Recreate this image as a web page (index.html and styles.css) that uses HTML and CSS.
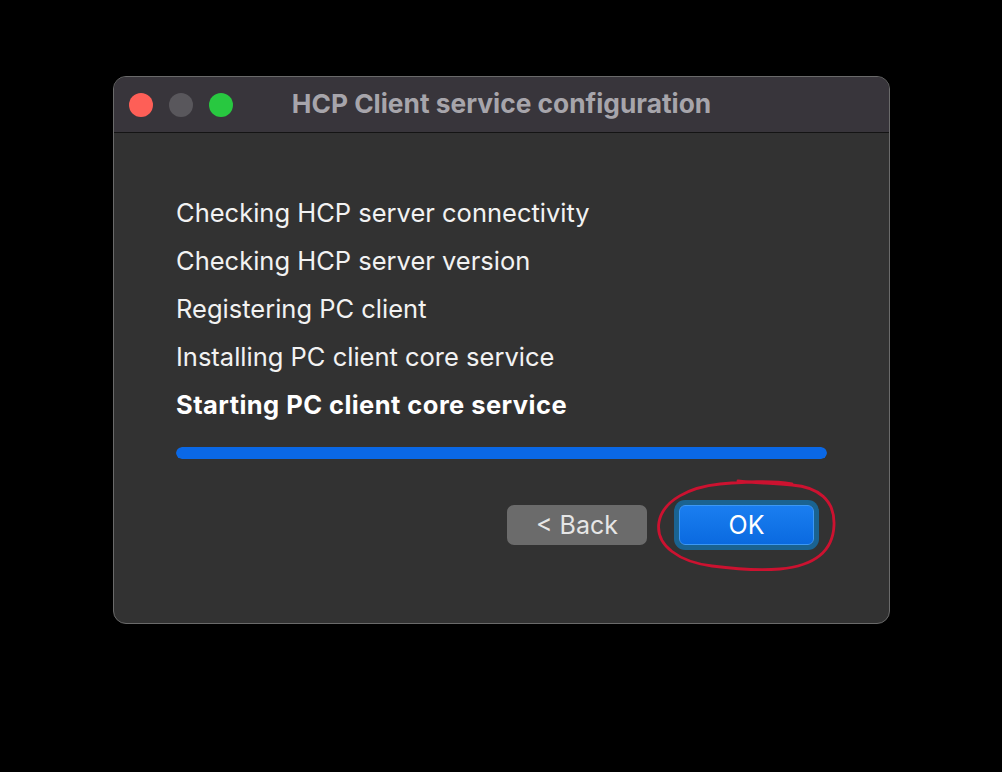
FILE: index.html
```html
<!DOCTYPE html>
<html>
<head>
<meta charset="utf-8">
<link rel="stylesheet" href="styles.css">
</head>
<body>
<div class="stage">
  <div class="window">
    <div class="titlebar">
      <div class="lights">
        <span class="light red"></span>
        <span class="light gray"></span>
        <span class="light green"></span>
      </div>
      <div class="title">HCP Client service configuration</div>
      <div></div>
    </div>
    <div class="content">
      <ul class="steps">
        <li>Checking HCP server connectivity</li>
        <li>Checking HCP server version</li>
        <li>Registering PC client</li>
        <li>Installing PC client core service</li>
        <li class="current">Starting PC client core service</li>
      </ul>
      <div class="progress"><div class="fill"></div></div>
      <div class="actions">
        <button class="btn back">&lt; Back</button>
        <button class="btn ok">OK</button>
      </div>
    </div>
    <svg class="scribble" width="1002" height="772" viewBox="0 0 1002 772">
      <path d="M 792 484 C 770 480, 745 482, 720 484 C 690 487, 663 500, 659 522 C 655 546, 680 562, 712 566 C 735 569, 755 571, 780 569 C 812 566, 833 553, 834 525 C 835 500, 818 487, 792 485 C 770 483, 752 483, 738 481" fill="none" stroke="#cc1230" stroke-width="2.8" stroke-linecap="round"/>
    </svg>
  </div>
</div>
</body>
</html>
```

FILE: styles.css
```css
* { box-sizing: border-box; }
html, body {
  margin: 0;
  padding: 0;
  background: #000;
  width: 1002px;
  height: 772px;
  overflow: hidden;
}
.stage {
  padding: 76px 0 0 113px;
}
.window {
  width: 777px;
  height: 548px;
  border: 1px solid #6a6a6a;
  border-radius: 13px;
  background: #323232;
  overflow: hidden;
  font-family: Inter, "Liberation Sans", sans-serif;
}
.titlebar {
  height: 56px;
  background: #38353b;
  border-bottom: 1px solid #141414;
  display: grid;
  grid-template-columns: 1fr auto 1fr;
  align-items: center;
  padding-left: 15px;
}
.lights {
  display: flex;
  gap: 16px;
}
.light {
  width: 24px;
  height: 24px;
  border-radius: 50%;
  display: block;
}
.red { background: #fe5f57; }
.gray { background: #59575c; }
.green { background: #28c840; }
.title {
  text-align: center;
  color: #a7a5ab;
  font-weight: 700;
  font-size: 26.3px;
  margin-left: -15px;
  padding-bottom: 2px;
}
.content {
  padding: 56px 62px 0 62px;
}
.steps {
  list-style: none;
  margin: 0;
  padding: 0;
}
.steps li {
  height: 48px;
  line-height: 48px;
  color: #f2f2f2;
  font-size: 25.5px;
}
.steps li.current {
  font-weight: 700;
  color: #ffffff;
  letter-spacing: 0.45px;
}
.progress {
  margin-top: 18px;
  height: 12px;
  border-radius: 6px;
  background: #3a3a3a;
  overflow: hidden;
}
.fill {
  width: 100%;
  height: 100%;
  background: #0a68e6;
  border-radius: 6px;
}
.actions {
  display: flex;
  justify-content: flex-end;
  align-items: center;
  gap: 32px;
  margin-top: 46px;
  padding-right: 13px;
}
.btn {
  font-family: Inter, "Liberation Sans", sans-serif;
  font-size: 25px;
  height: 40px;
  border: none;
  border-radius: 7px;
  padding: 0;
  margin: 0;
}
.back {
  width: 140px;
  background: #6b6b6b;
  color: #e6e6e6;
}
.ok {
  width: 135px;
  background: linear-gradient(#1a7ef0, #0a6ae0);
  color: #ffffff;
  border: 1px solid #3c98f4;
  box-shadow: 0 0 0 5px #1a6391;
  border-radius: 6px;
}
.scribble {
  position: absolute;
  left: 0;
  top: 0;
  pointer-events: none;
}
```
